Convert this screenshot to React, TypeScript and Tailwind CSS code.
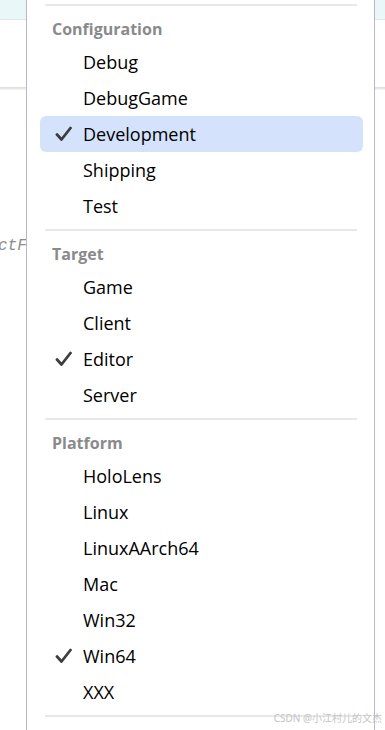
const sections = [
  {
    title: 'Configuration',
    items: ['Debug', 'DebugGame', 'Development', 'Shipping', 'Test'],
    checked: 'Development',
    highlighted: 'Development',
  },
  {
    title: 'Target',
    items: ['Game', 'Client', 'Editor', 'Server'],
    checked: 'Editor',
    highlighted: '',
  },
  {
    title: 'Platform',
    items: ['HoloLens', 'Linux', 'LinuxAArch64', 'Mac', 'Win32', 'Win64', 'XXX'],
    checked: 'Win64',
    highlighted: '',
  },
]

const Check = () => (
  <svg width="17" height="16" viewBox="0 0 17 16" className="shrink-0">
    <path d="M2 8.5 L6.5 13.5 L15.5 2" fill="none" stroke="#3d3d3d" strokeWidth="2.8" strokeLinecap="round" strokeLinejoin="round" />
  </svg>
)

export default function App() {
  return (
    <div className="relative w-[385px] h-[730px] overflow-hidden bg-white font-['Open_Sans',sans-serif]">
      {/* editor behind the menu */}
      <div className="flex flex-col">
        <div className="h-[20px] bg-[#eaf7f9] border-b border-[#e4e4e4]" />
        <div className="h-[67px] bg-white" />
        <div className="h-[3px] bg-gradient-to-b from-[#dcdcdc] to-[#f4f4f4]" />
        <div className="mt-[146px] font-['Liberation_Mono',monospace] italic text-[16px] text-[#8c8c8c] leading-[20px] -ml-[2px]">
          ctF
        </div>
      </div>

      {/* dropdown menu */}
      <div className="absolute left-[26px] top-0 bottom-0 w-[349px] bg-white border-x border-[#b7b7cb] pt-[4px]">
        {sections.map(section => (
          <div key={section.title}>
            <div className="h-[2px] bg-[#e8e8e8] ml-[18px] mr-[17px]" />
            <div className="pt-[13px] pb-[5px] pl-[25px] leading-[20px] text-[16px] font-bold text-[#8a8a8a]">
              {section.title}
            </div>
            <div className="pb-[5px]">
              {section.items.map(item => (
                <div
                  key={item}
                  className={`ml-[13px] mr-[11px] h-[36px] flex items-center rounded-[6px] ${
                    item === section.highlighted ? 'bg-[#d4e2fc]' : ''
                  }`}
                >
                  <div className="w-[43px] pl-[15px] flex items-center">
                    {item === section.checked && <Check />}
                  </div>
                  <span className="text-[18px] text-black leading-[24px]">{item}</span>
                </div>
              ))}
            </div>
          </div>
        ))}
        <div className="h-[2px] bg-[#e8e8e8] ml-[18px] mr-[17px]" />
      </div>

      <div className="absolute right-[3px] bottom-[5px] text-[10px] text-[#c4c4c4] font-['Noto_Sans','Noto_Sans_CJK_SC',sans-serif] leading-[14px]">
        CSDN @小江村儿的文杰
      </div>
    </div>
  )
}
